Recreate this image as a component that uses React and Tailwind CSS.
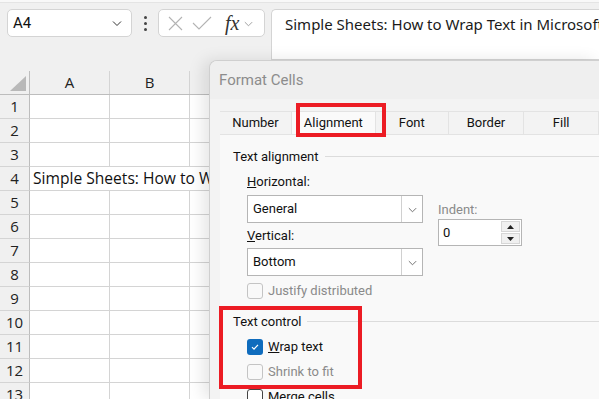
import React from 'react';

const ui = { fontFamily: 'Roboto, "Noto Sans", sans-serif' };
const cellFont = { fontFamily: '"Open Sans", "Noto Sans", sans-serif' };

const Chevron = ({ className = 'w-3 h-3' }) => (
  <svg className={className} viewBox="0 0 12 12" fill="none" stroke="currentColor" strokeWidth="1">
    <path d="M2 4.5l4 4 4-4" />
  </svg>
);

const rows = [1, 2, 3, 4, 5, 6, 7, 8, 9, 10, 11, 12, 13];

const Grid = () => (
  <div className="flex flex-col mt-[11px]" style={cellFont}>
    <div className="flex h-[24px] border-b border-[#bdbdbd]">
      <div className="w-[30px] border-r border-[#bdbdbd] relative">
        <svg className="absolute left-[10px] top-[5px] w-[16px] h-[15px]" viewBox="0 0 16 15">
          <path d="M16 0V15H0Z" fill="#b9b9b9" />
        </svg>
      </div>
      <div className="w-[80px] border-r border-[#d4d4d4] flex items-center justify-center text-[15px] text-[#222]">A</div>
      <div className="w-[80px] border-r border-[#d4d4d4] flex items-center justify-center text-[15px] text-[#222]">B</div>
      <div className="flex-1" />
    </div>
    {rows.map((r) => (
      <div key={r} className="flex h-[24px]">
        <div className="w-[30px] border-r border-[#bdbdbd] border-b border-b-[#d4d4d4] flex items-center justify-center text-[15px] text-[#222]">
          {r}
        </div>
        {r === 4 ? (
          <div className="flex-1 bg-white border-b border-[#d4d4d4] flex items-center pl-[3px] text-[15.6px] text-[#111] whitespace-nowrap overflow-hidden">
            Simple Sheets: How to Wrap Text in Microsoft Excel
          </div>
        ) : (
          <>
            <div className="w-[80px] bg-white border-r border-b border-[#d4d4d4]" />
            <div className="w-[80px] bg-white border-r border-b border-[#d4d4d4]" />
            <div className="flex-1 bg-white border-b border-[#d4d4d4]" />
          </>
        )}
      </div>
    ))}
  </div>
);

const Select = ({ value }) => (
  <div className="w-[176px] h-[28px] bg-white border border-[#b5b5b5] flex">
    <div className="flex-1 flex items-center pl-[5px] text-[13px] text-[#111]">{value}</div>
    <div className="w-[21px] border-l border-[#d0d0d0] flex items-center justify-center text-[#666]">
      <Chevron className="w-[11px] h-[11px]" />
    </div>
  </div>
);

const Check = ({ checked, muted, children, className = '' }) => (
  <div className={`flex items-center gap-[5px] h-[16px] ${className}`}>
    {checked ? (
      <div className="w-[16px] h-[16px] rounded-[3px] bg-[#0f6cbd] flex items-center justify-center">
        <svg className="w-[10px] h-[10px]" viewBox="0 0 10 10" fill="none" stroke="white" strokeWidth="1.2">
          <path d="M2 5.2l2 2 4-4.4" />
        </svg>
      </div>
    ) : (
      <div className={`w-[16px] h-[16px] rounded-[3px] border ${muted ? 'border-[#c4c4c4] bg-[#f9f9f9]' : 'border-[#444] bg-white'}`} />
    )}
    <span className={`text-[13px] ${muted ? 'text-[#8a8a8a]' : 'text-[#111]'}`}>{children}</span>
  </div>
);

const Section = ({ title, className = '' }) => (
  <div className={`flex items-center gap-[6px] h-[19px] ${className}`}>
    <span className="text-[13px] text-[#111]">{title}</span>
    <div className="flex-1 h-px bg-[#dcdcdc]" />
  </div>
);

const Dialog = () => (
  <div className="absolute left-[209px] top-[60px] right-0 bottom-0 rounded-tl-[8px] bg-[#f3f3f3] border-l border-t border-[#cfcfcf] shadow-[-6px_0_16px_rgba(0,0,0,0.10)] overflow-hidden" style={ui}>
    <div className="h-[38px] bg-[#efefef] flex items-center pl-[9px] text-[15px] text-[#8c8c8c]">Format Cells</div>
    <div className="pl-[10px] pt-[12px]">
      <div className="flex h-[24px] border-t border-b border-[#e3e3e3] text-[13px] text-[#111]">
        <div className="w-[77px] flex items-center justify-center border-r border-[#e3e3e3]">Number</div>
        <div className="w-[90px] flex items-center justify-center bg-[#fafafa] border-r border-[#e3e3e3]">Alignment</div>
        <div className="w-[78px] flex items-center justify-center border-r border-[#e3e3e3]">Font</div>
        <div className="w-[81px] flex items-center justify-center border-r border-[#e3e3e3]">Border</div>
        <div className="w-[80px] flex items-center justify-center border-r border-[#e3e3e3]">Fill</div>
        <div className="flex-1" />
      </div>
      <div className="bg-[#f9f9f9] h-[300px] pl-[13px] pt-[12px]">
        <Section title="Text alignment" />
        <div className="pl-[14px] flex gap-[15px]">
          <div className="flex flex-col">
            <div className="text-[13px] text-[#111] mt-[7px] h-[18px] leading-[18px]"><span className="underline">H</span>orizontal:</div>
            <div className="mt-[4px]"><Select value="General" /></div>
            <div className="text-[13px] text-[#111] mt-[4px] h-[18px] leading-[18px]"><span className="underline">V</span>ertical:</div>
            <div className="mt-[3px]"><Select value="Bottom" /></div>
            <Check muted className="mt-[7px]">Justify distributed</Check>
          </div>
          <div className="flex flex-col pt-[35px]">
            <div className="text-[13px] text-[#8a8a8a] h-[18px] leading-[18px]">Indent:</div>
            <div className="mt-0 w-[84px] h-[27px] bg-white border border-[#b5b5b5] flex">
              <div className="flex-1 flex items-center pl-[4px] text-[13px] text-[#111]">0</div>
              <div className="w-[20px] flex flex-col py-[1px] pr-[1px] gap-px">
                <div className="flex-1 bg-[#f0f0f0] border border-[#d6d6d6] flex items-center justify-center">
                  <svg className="w-[7px] h-[4px]" viewBox="0 0 7 4"><path d="M0 4L3.5 0 7 4Z" fill="#222" /></svg>
                </div>
                <div className="flex-1 bg-[#f0f0f0] border border-[#d6d6d6] flex items-center justify-center">
                  <svg className="w-[7px] h-[4px]" viewBox="0 0 7 4"><path d="M0 0L3.5 4 7 0Z" fill="#222" /></svg>
                </div>
              </div>
            </div>
          </div>
        </div>
        <Section title="Text control" className="mt-[13px]" />
        <div className="pl-[14px] flex flex-col">
          <Check checked className="mt-[8px]"><span className="underline">W</span>rap text</Check>
          <Check muted className="mt-[9px]">Shrink to fit</Check>
          <Check className="mt-[9px]">Merge cells</Check>
        </div>
      </div>
    </div>
  </div>
);

export default function App() {
  return (
    <div className="relative w-[599px] h-[399px] overflow-hidden bg-[#f0f0f0]">
      <div className="h-[3px] bg-[#f8f8f8] border-b border-[#e4e4e4]" />
      <div className="flex items-start pt-[6px] pl-[7px]">
        <div className="w-[125px] h-[28px] bg-white border border-[#d4d4d4] rounded-[5px] flex items-center pl-[5px] pr-[8px]" style={ui}>
          <span className="flex-1 text-[15px] text-[#111]">A4</span>
          <Chevron className="w-[12px] h-[12px] text-[#333]" />
        </div>
        <div className="w-[26px] h-[28px] flex flex-col items-center justify-center gap-[3px]">
          <div className="w-[3px] h-[3px] bg-[#444] rounded-full" />
          <div className="w-[3px] h-[3px] bg-[#444] rounded-full" />
          <div className="w-[3px] h-[3px] bg-[#444] rounded-full" />
        </div>
        <div className="w-[107px] h-[28px] bg-white border border-[#d4d4d4] rounded-[5px] flex items-center pl-[9px] gap-[9px]">
          <svg className="w-[15px] h-[15px]" viewBox="0 0 15 15" fill="none" stroke="#b3b3b3" strokeWidth="1.1">
            <path d="M1 1l13 13M14 1L1 14" />
          </svg>
          <svg className="w-[20px] h-[15px]" viewBox="0 0 20 15" fill="none" stroke="#b3b3b3" strokeWidth="1.1">
            <path d="M1 7l6 6L19 1" />
          </svg>
          <span className="text-[20px] italic text-[#333] leading-none ml-[4px]" style={{ fontFamily: '"Liberation Serif", serif' }}>fx</span>
          <Chevron className="w-[11px] h-[11px] text-[#999] -ml-[5px]" />
        </div>
        <div className="ml-[6px] flex-1 h-[51px] bg-white border border-[#d4d4d4] border-r-0 rounded-tl-[5px] pl-[13px] pt-[3px] text-[15px] text-[#1a1a1a] whitespace-nowrap overflow-hidden" style={{ fontFamily: '"Noto Sans", sans-serif' }}>
          Simple Sheets: How to Wrap Text in Microsoft Excel
        </div>
      </div>
      <Grid />
      <Dialog />
      <div className="absolute left-[296px] top-[103px] w-[90px] h-[34px] border-[4px] border-[#ec1c24]" />
      <div className="absolute left-[219px] top-[306px] w-[143px] h-[83px] border-[4px] border-[#ec1c24]" />
    </div>
  );
}
